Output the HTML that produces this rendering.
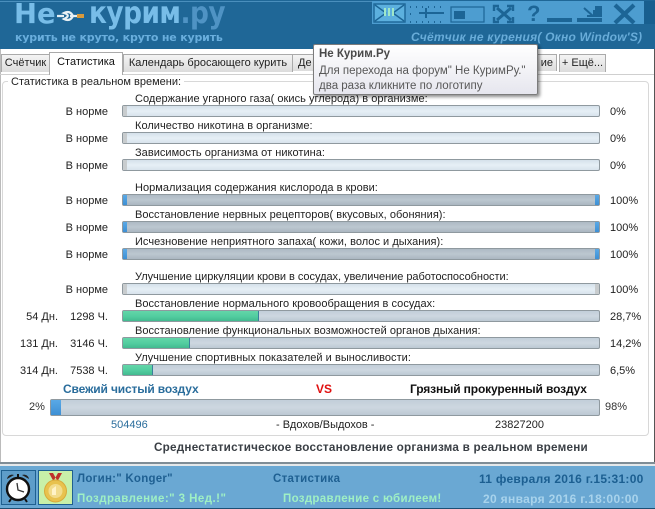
<!DOCTYPE html>
<html><head><meta charset="utf-8">
<style>
html,body{margin:0;padding:0;background:#fff}
#r{position:relative;width:655px;height:509px;overflow:hidden;background:#fff;font-family:"Liberation Sans",sans-serif;font-size:11px;color:#222}
#r div,#r svg{position:absolute}
.t{white-space:nowrap;line-height:14px}
.l{left:135px;white-space:nowrap;line-height:14px;margin-top:1px;letter-spacing:.03px}
.n{width:108px;left:0;text-align:right;white-space:nowrap;line-height:14px;padding-right:0}
.d{width:46px;left:12px;text-align:right;line-height:14px;white-space:nowrap}
.p{left:610px;line-height:14px;white-space:nowrap}
.b{left:122px;width:476px;height:10px;border:1px solid #8f999f;border-radius:2px;background:linear-gradient(#c2ced9,#cdd7e0 50%,#bcc8d3)}
.e{background:linear-gradient(#d5e1ea,#e6eff6 50%,#d8e3ec)}
.h{background:linear-gradient(#aebac4,#bcc7d0 50%,#aab6c0)}
.f{left:0;top:0;height:10px;background:linear-gradient(#62d6a9,#50cb9e 60%,#42b98f);border-right:1px solid #3a7f9c}
.g{left:0;top:0;width:4px;height:10px;background:#c8ccce}
.m{top:0;width:4px;height:10px;background:linear-gradient(#5aa9e6,#3d8fd4)}
.tab{top:54px;height:17px;border:1px solid #aaa;border-bottom:0;background:linear-gradient(#f4f4f4,#dcdcdc);line-height:17px;text-align:center;white-space:nowrap}
.w{font-family:"DejaVu Sans",sans-serif;font-weight:bold;white-space:nowrap}
</style></head><body>
<div id="r">
<!-- header -->
<div style="left:0;top:0;width:655px;height:49px;background:#1f6797"></div>
<div style="left:0;top:1px;width:655px;height:1px;background:#4a8fbd"></div>
<div class="w" style="left:14px;top:-3px;font-size:28px;line-height:34px;color:#78bde8;transform:scaleX(.98);transform-origin:0 0">Не</div>
<svg style="left:56px;top:9px" width="30" height="14" viewBox="0 0 30 14"><path d="M1 7H8M8 4C12 2 15 3 17 7C15 11 12 12 8 10C12 8 14 6 8 4ZM14 7H21" fill="none" stroke="#e8f0f4" stroke-width="2.2"/><rect x="21" y="5" width="7" height="4" fill="#d99a3c"/></svg>
<div class="w" style="left:89px;top:-3px;font-size:30px;line-height:34px;color:#78bde8;letter-spacing:-.6px;transform:scaleX(.88);transform-origin:0 0">курим<span style="color:#4f93c4">.ру</span></div>
<div class="w" style="left:15px;top:30px;font-size:11px;line-height:15px;color:#69aedd;letter-spacing:-.18px">курить не круто, круто не курить</div>
<!-- toolbar -->
<div style="left:372px;top:1px;width:272px;height:23px;background:#4d9dd0"></div>
<div style="left:644px;top:1px;width:11px;height:23px;background:#185f8f"></div>
<svg style="left:372px;top:1px" width="272" height="23" viewBox="0 0 272 23">
<rect x="2" y="3" width="31" height="18" fill="#5cb0de" stroke="#1c6596" stroke-width="1.4"/>
<path d="M3 4L14 12M32 4L21 12M3 20L14 12M32 20L21 12" stroke="#1c6596" stroke-width="1.4" fill="none"/>
<path d="M13 7V15M17 7V15M21 7V15" stroke="#9fe8c8" stroke-width="2"/>
<path d="M38 6h1M44 6h1M50 6h1M56 6h1M62 6h1M68 6h1M38 21h1M44 21h1M50 21h1M56 21h1M62 21h1M68 21h1M38 13h1" stroke="#1c6596" stroke-width="2" fill="none"/>
<path d="M47 12H72M54 7V17" stroke="#1c6596" stroke-width="2" fill="none"/>
<rect x="79" y="6" width="33" height="15" fill="none" stroke="#1c6596" stroke-width="1.2"/>
<rect x="82" y="10" width="11" height="8" fill="#1c6596"/>
<path d="M122 10V5H127M135 5H141V10M122 16V21H127M135 21H141V16" fill="none" stroke="#1c6596" stroke-width="2.4"/>
<path d="M125 7L139 19M139 7L125 19" stroke="#1c6596" stroke-width="3"/>
<text x="155" y="20" font-family="Liberation Sans" font-weight="bold" font-size="22" fill="#1c6596">?</text>
<rect x="175" y="17" width="25" height="4" fill="#1c6596"/>
<rect x="205" y="17" width="25" height="4" fill="#1c6596"/>
<rect x="223" y="5" width="7" height="11" fill="#1c6596"/>
<path d="M212 7L221 15M215 15H222V9" stroke="#1c6596" stroke-width="2" fill="none"/>
<path d="M243 4L262 22M262 4L243 22" stroke="#1c6596" stroke-width="4.2"/>
</svg>
<div class="t" style="left:411px;top:30px;font-size:12px;font-weight:bold;font-style:italic;color:#68acd9;letter-spacing:.22px">Счётчик не курения( Окно Window'S)</div>
<!-- body -->
<div style="left:654px;top:49px;width:1px;height:414px;background:#555"></div>
<div style="left:0;top:49px;width:1px;height:414px;background:#bbb"></div>
<!-- tabs -->
<div class="tab" style="left:1px;width:47px">Счётчик</div>
<div class="tab" style="left:123px;width:168px">Календарь бросающего курить</div>
<div class="tab" style="left:292px;width:50px;text-align:left;padding-left:5px;box-sizing:border-box">Де</div>
<div class="tab" style="left:500px;width:57px;text-align:right;padding-right:3px;box-sizing:border-box">ие</div>
<div class="tab" style="left:559px;width:45px">+ Ещё...</div>
<div style="left:0;top:74px;width:654px;height:1px;background:#cfcfcf"></div>
<div class="tab" style="left:49px;top:52px;width:72px;height:22px;background:#fff;line-height:19px;z-index:1;color:#111">Статистика</div>
<!-- group -->
<div style="left:2px;top:81px;width:645px;height:353px;border:1px solid #d8d8d8;border-radius:4px"></div>
<div class="t" style="left:8px;top:75px;background:#fff;padding:0 3px;color:#222">Статистика в реальном времени:</div>
<!-- rows -->
<div class="l" style="top:91px">Содержание угарного газа( окись углерода) в организме:</div>
<div class="n" style="top:105px">В норме</div>
<div class="b e" style="top:105px"><div class="g"></div></div><div class="p" style="top:105px">0%</div>
<div class="l" style="top:118px">Количество никотина в организме:</div>
<div class="n" style="top:132px">В норме</div>
<div class="b e" style="top:132px"><div class="g"></div></div><div class="p" style="top:132px">0%</div>
<div class="l" style="top:145px">Зависимость организма от никотина:</div>
<div class="n" style="top:159px">В норме</div>
<div class="b e" style="top:159px"><div class="g"></div></div><div class="p" style="top:159px">0%</div>
<div class="l" style="top:180px">Нормализация содержания кислорода в крови:</div>
<div class="n" style="top:194px">В норме</div>
<div class="b h" style="top:194px"><div class="m" style="left:0"></div><div class="m" style="right:0"></div></div><div class="p" style="top:194px">100%</div>
<div class="l" style="top:207px">Восстановление нервных рецепторов( вкусовых, обоняния):</div>
<div class="n" style="top:221px">В норме</div>
<div class="b h" style="top:221px"><div class="m" style="left:0"></div><div class="m" style="right:0"></div></div><div class="p" style="top:221px">100%</div>
<div class="l" style="top:234px">Исчезновение неприятного запаха( кожи, волос и дыхания):</div>
<div class="n" style="top:248px">В норме</div>
<div class="b h" style="top:248px"><div class="m" style="left:0"></div><div class="m" style="right:0"></div></div><div class="p" style="top:248px">100%</div>
<div class="l" style="top:269px;letter-spacing:-.04px">Улучшение циркуляции крови в сосудах, увеличение работоспособности:</div>
<div class="n" style="top:283px">В норме</div>
<div class="b e" style="top:283px"><div class="g"></div><div class="g" style="left:auto;right:0"></div></div><div class="p" style="top:283px">100%</div>
<div class="l" style="top:296px">Восстановление нормального кровообращения в сосудах:</div>
<div class="d" style="top:310px">54 Дн.</div><div class="n" style="top:310px">1298 Ч.</div>
<div class="b" style="top:310px"><div class="f" style="width:135px"></div></div><div class="p" style="top:310px">28,7%</div>
<div class="l" style="top:323px">Восстановление функциональных возможностей органов дыхания:</div>
<div class="d" style="top:337px">131 Дн.</div><div class="n" style="top:337px">3146 Ч.</div>
<div class="b" style="top:337px"><div class="f" style="width:66px"></div></div><div class="p" style="top:337px">14,2%</div>
<div class="l" style="top:350px">Улучшение спортивных показателей и выносливости:</div>
<div class="d" style="top:364px">314 Дн.</div><div class="n" style="top:364px">7538 Ч.</div>
<div class="b" style="top:364px"><div class="f" style="width:29px"></div></div><div class="p" style="top:364px">6,5%</div>
<!-- vs -->
<div class="t" style="left:63px;top:382px;font-weight:bold;font-size:12px;color:#2a6d9c;letter-spacing:-.15px">Свежий чистый воздух</div>
<div class="t" style="left:316px;top:382px;font-weight:bold;font-size:12px;color:#e01010">VS</div>
<div class="t" style="left:410px;top:382px;font-weight:bold;font-size:12px;color:#111;letter-spacing:-.13px">Грязный прокуренный воздух</div>
<div class="t" style="left:29px;top:400px;color:#333">2%</div>
<div class="b" style="left:50px;top:399px;width:548px;height:15px"><div class="m" style="left:0;width:10px;height:15px"></div></div>
<div class="t" style="left:605px;top:400px;color:#333">98%</div>
<div class="t" style="left:111px;top:418px;color:#2a6d9c">504496</div>
<div class="t" style="left:276px;top:418px">- Вдохов/Выдохов -</div>
<div class="t" style="left:495px;top:418px">23827200</div>
<div class="t" style="left:154px;top:441px;font-weight:bold;font-size:11.7px;color:#3a3f45;letter-spacing:.23px">Среднестатистическое восстановление организма в реальном времени</div>
<!-- footer -->
<div style="left:0;top:462px;width:655px;height:2px;background:#7f8d96"></div>
<div style="left:0;top:464px;width:655px;height:2px;background:#e4e8ea"></div>
<div style="left:0;top:466px;width:655px;height:42px;background:#6aa8d3"></div>
<div style="left:0;top:508px;width:655px;height:1px;background:#1d4f73"></div>
<div style="left:1px;top:470px;width:33px;height:33px;background:#5e9dc9;border:1px solid #1f6090"></div>
<svg style="left:3px;top:471px" width="30" height="33" viewBox="0 0 30 33">
<circle cx="15" cy="18" r="11" fill="#fff" stroke="#111" stroke-width="2.4"/>
<path d="M4 8A5 5 0 0 1 11 4ZM26 8A5 5 0 0 0 19 4Z" fill="#222"/><path d="M15 3V6M8 28L6 31M22 28L24 31" stroke="#111" stroke-width="2"/>
<path d="M14 12L15 19L21 21" fill="none" stroke="#333" stroke-width="1.3"/>
</svg>
<div style="left:38px;top:470px;width:33px;height:33px;background:#c8f0a8;border:1px solid #1f6090"></div>
<svg style="left:39px;top:471px" width="33" height="33" viewBox="0 0 33 33">
<path d="M10 2L16 13L19 11L14 2ZM23 2L17 13L14 11L19 2Z" fill="#c0302a"/>
<circle cx="16.5" cy="20" r="11" fill="#e8c24e" stroke="#d9a93a"/>
<circle cx="16.5" cy="20" r="7" fill="#f2dc8c"/>
<path d="M13 24V18L17 15V24Z" fill="#fff3c8"/>
</svg>
<div class="t" style="left:77px;top:472px;font-weight:bold;font-size:11.5px;color:#1f6092;letter-spacing:.25px">Логин:" Konger"</div>
<div class="t" style="left:77px;top:492px;font-weight:bold;font-size:11.5px;color:#9ff0c4;letter-spacing:.45px">Поздравление:" 3 Нед.!"</div>
<div class="t" style="left:273px;top:472px;font-weight:bold;font-size:11.5px;color:#1f6092;letter-spacing:.3px">Статистика</div>
<div class="t" style="left:283px;top:492px;font-weight:bold;font-size:11.5px;color:#9ff0c4;letter-spacing:.32px">Поздравление с юбилеем!</div>
<div class="t" style="left:479px;top:472px;font-weight:bold;font-size:12px;color:#1c5f91;letter-spacing:.27px">11 февраля 2016 г.15:31:00</div>
<div class="t" style="left:483px;top:492px;font-weight:bold;font-size:12px;color:#a8d3ec;letter-spacing:.33px">20 января 2016 г.18:00:00</div>
<!-- tooltip -->
<div style="left:313px;top:44px;width:225px;height:51px;box-sizing:border-box;border:1px solid #7c7c7c;border-radius:2px;background:linear-gradient(#fff,#e6e6ee);box-shadow:2px 2px 3px rgba(0,0,0,.45);z-index:5">
<div class="t" style="left:5px;top:2px;font-weight:bold;color:#4a4a4a;font-size:11.5px">Не Курим.Ру</div>
<div class="t" style="left:5px;top:19px;color:#575757;font-size:11.5px">Для перехода на форум" Не КуримРу."</div>
<div class="t" style="left:5px;top:34px;color:#575757;font-size:11.5px">два раза кликните по логотипу</div>
</div>
</div>
</body></html>
